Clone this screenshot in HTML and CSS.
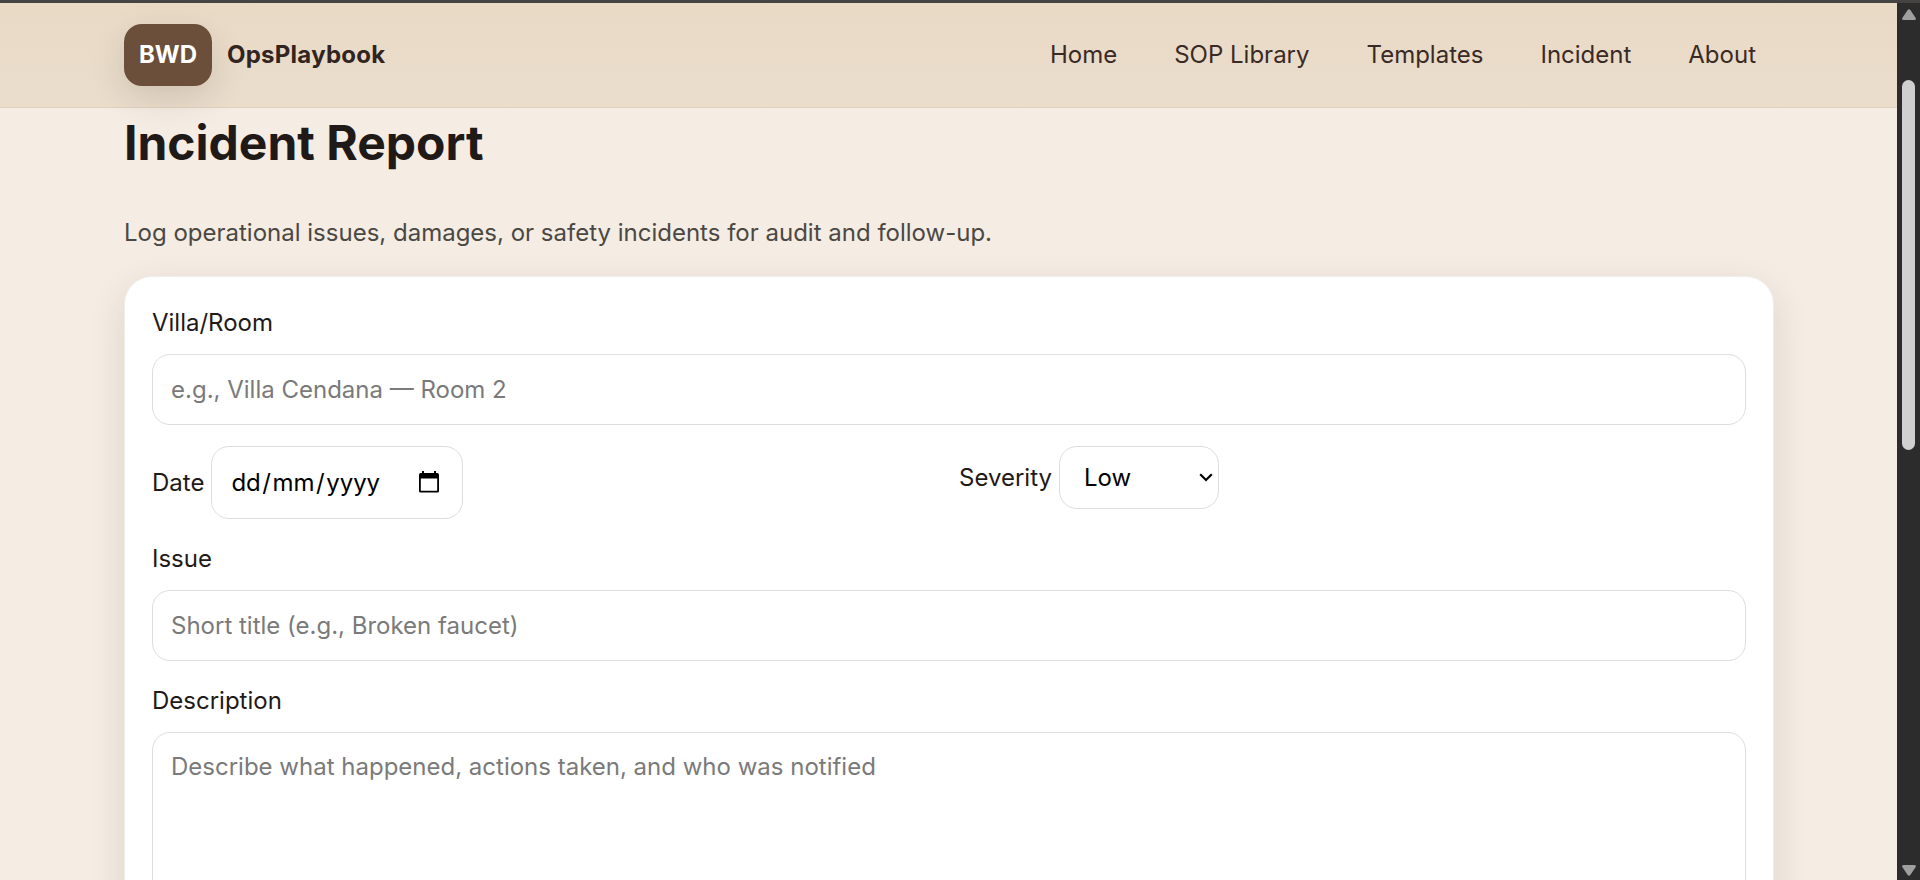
FILE: index.html
```html
<!DOCTYPE html>
<html lang="en">
<head>
<meta charset="utf-8">
<title>Incident Report</title>
<link rel="stylesheet" href="styles.css">
</head>
<body>
<div class="window">
  <div class="page">
    <header class="header">
      <div class="brand"><span class="logo">BWD</span><span class="brand-name">OpsPlaybook</span></div>
      <nav class="nav"><a>Home</a><a>SOP Library</a><a>Templates</a><a>Incident</a><a>About</a></nav>
    </header>
    <main class="main">
      <h1 class="title">Incident Report</h1>
      <p class="lead">Log operational issues, damages, or safety incidents for audit and follow-up.</p>
      <form class="card">
        <label class="label" for="room">Villa/Room</label>
        <input class="input" id="room" placeholder="e.g., Villa Cendana — Room 2">
        <div class="row">
          <div class="inline"><span class="label-inline">Date</span>
            <div class="date"><span class="date-text"><span>dd</span><span class="sep">/</span><span>mm</span><span class="sep">/</span><span>yyyy</span></span>
              <svg class="calendar" viewBox="0 0 20 22"><path fill="#000" fill-rule="evenodd" d="M3 0h2v2h10V0h2v2h1.200Q20 2 20 4v16q0 1.500-1.500 1.500h-17Q0 21.500 0 20V4Q0 2 1.800 2H3zM1.800 7.500v12.200h16.400V7.500z"/></svg>
            </div>
          </div>
          <div class="inline"><span class="label-inline">Severity</span>
            <div class="select"><span>Low</span>
              <svg class="chevron" viewBox="0 0 14 9"><path d="M1.200 1.200 7 7l5.800-5.800" fill="none" stroke="#000" stroke-width="2.200"/></svg>
            </div>
          </div>
        </div>
        <label class="label" for="issue">Issue</label>
        <input class="input" id="issue" placeholder="Short title (e.g., Broken faucet)">
        <label class="label" for="desc">Description</label>
        <textarea class="input area" id="desc" placeholder="Describe what happened, actions taken, and who was notified"></textarea>
      </form>
    </main>
  </div>
  <div class="scrollbar">
    <svg class="arrow" viewBox="0 0 14 11"><path d="M5.500 1.200Q7-.8 8.500 1.200L13.700 9Q14.300 11 12.500 11h-11Q-.3 11 .3 9z" fill="#9f9f9f"/></svg>
    <div class="thumb"></div>
    <svg class="arrow arrow-down" viewBox="0 0 14 11"><path d="M5.500 9.800Q7 11.800 8.500 9.800L13.700 2Q14.300 0 12.500 0h-11Q-.3 0 .3 2z" fill="#9f9f9f"/></svg>
  </div>
</div>
</body>
</html>
```
FILE: styles.css
```css
* { box-sizing: border-box; }
body { margin: 0; height: 880px; overflow: hidden; font: 24px/36px Inter, sans-serif; color: #1f1a17; }
.window { display: flex; height: 880px; border-top: 3px solid #454442; background: #2c2c2c; }
.page { width: 1897px; height: 877px; overflow: hidden; background: #f5ece3; }
.header { position: relative; z-index: 1; display: flex; align-items: center; justify-content: space-between; height: 105px; padding: 0 141px 0 124px; background: linear-gradient(#e9dac6, #ebddcc); border-bottom: 1px solid #e2d1bb; }
.brand { display: flex; align-items: center; gap: 15px; font-weight: 700; }
.logo { display: flex; align-items: center; justify-content: center; width: 88px; height: 62px; border-radius: 18px; background: #6b4f3a; color: #fff; box-shadow: 0 12px 36px rgba(0, 0, 0, .12); }
.brand-name { color: #32241f; letter-spacing: .25px; }
.nav { display: flex; gap: 57px; color: #3a2a25; }
.main { padding: 5px 123px 0 124px; }
.title { margin: 0; font-size: 48px; line-height: 60px; font-weight: 700; }
.lead { margin: 42px 0 25px; color: #4a4843; }
.card { height: 800px; padding: 28px 27px 27px; border: 1px solid #eeeeec; border-radius: 28px; background: #fff; box-shadow: 0 12px 36px rgba(40, 30, 15, .12); }
.label { display: block; margin-bottom: 13px; }
.input { display: block; width: 100%; height: 71px; margin: 0 0 22px; padding: 0 18px; border: 1px solid #ddd; border-radius: 18px; background: #fff; font: inherit; outline: 0; }
.input::placeholder { color: #7a7a7a; opacity: 1; }
.area { height: 300px; padding-top: 16px; resize: none; }
.row { display: grid; grid-template-columns: 1fr 1fr; gap: 20px; align-items: start; margin: -1px 0 22px; }
.inline { display: flex; align-items: center; gap: 7px; }
.date { display: flex; align-items: center; justify-content: space-between; width: 252px; height: 73px; padding: 0 23px 0 19px; border: 1px solid #ddd; border-radius: 18px; color: #000; }
.date-text { display: flex; }
.sep { padding: 0 1.5px; }
.calendar { width: 20px; height: 22px; margin-top: -2px; }
.select { display: flex; align-items: center; justify-content: space-between; width: 160px; height: 63px; padding: 0 5px 0 24px; border: 1px solid #ddd; border-radius: 18px; color: #000; }
.chevron { width: 14px; height: 9px; }
.scrollbar { display: flex; flex-direction: column; align-items: center; width: 23px; padding: 6px 0 4px; }
.arrow { width: 14px; height: 11px; }
.thumb { width: 13px; height: 370px; margin-top: 60px; border-radius: 7px; background: #d0d0d0; }
.arrow-down { margin-top: auto; }
```
